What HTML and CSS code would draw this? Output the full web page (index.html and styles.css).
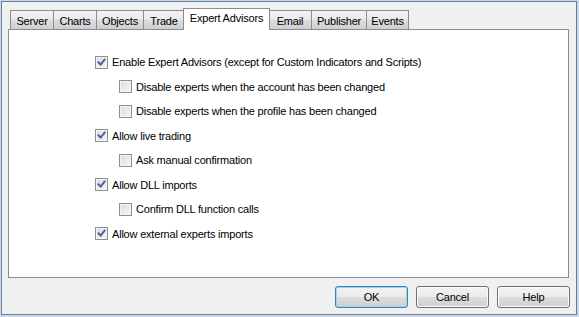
FILE: index.html
```html
<!DOCTYPE html>
<html>
<head>
<meta charset="utf-8">
<link rel="stylesheet" href="styles.css">
</head>
<body>
<div class="window">
  <div class="tabs">
    <div class="tab w-server">Server</div>
    <div class="tab w-charts">Charts</div>
    <div class="tab w-objects">Objects</div>
    <div class="tab w-trade">Trade</div>
    <div class="tab active w-ea">Expert Advisors</div>
    <div class="tab w-email">Email</div>
    <div class="tab w-pub">Publisher</div>
    <div class="tab w-events">Events</div>
  </div>
  <div class="panel">
    <div class="options">
      <label class="opt"><span class="cb checked"></span><span>Enable Expert Advisors (except for Custom Indicators and Scripts)</span></label>
      <label class="opt sub"><span class="cb"></span><span>Disable experts when the account has been changed</span></label>
      <label class="opt sub"><span class="cb"></span><span>Disable experts when the profile has been changed</span></label>
      <label class="opt"><span class="cb checked"></span><span>Allow live trading</span></label>
      <label class="opt sub"><span class="cb"></span><span>Ask manual confirmation</span></label>
      <label class="opt"><span class="cb checked"></span><span>Allow DLL imports</span></label>
      <label class="opt sub"><span class="cb"></span><span>Confirm DLL function calls</span></label>
      <label class="opt"><span class="cb checked"></span><span>Allow external experts imports</span></label>
    </div>
  </div>
  <div class="buttons">
    <button class="btn default">OK</button>
    <button class="btn">Cancel</button>
    <button class="btn">Help</button>
  </div>
</div>
</body>
</html>
```
FILE: styles.css
```css
html, body {
  margin: 0;
  padding: 0;
}
body {
  background: #c9d8ea;
  width: 579px;
  height: 317px;
  overflow: hidden;
  font-family: "Liberation Sans", Arial, sans-serif;
  font-size: 11px;
  letter-spacing: -0.2px;
  color: #000;
}
.window {
  box-sizing: border-box;
  margin: 1px 0 0 1px;
  width: 576px;
  height: 314px;
  background: #f0f0f0;
  border: 1px solid #6b7d95;
  padding: 0 6px 0 6px;
  display: flex;
  flex-direction: column;
}
.tabs {
  display: flex;
  align-items: flex-end;
  height: 20px;
  padding-top: 6px;
  padding-left: 2px;
  position: relative;
  z-index: 2;
}
.tab {
  box-sizing: border-box;
  height: 19px;
  margin-bottom: -1px;
  border: 1px solid #898c95;
  border-bottom: none;
  border-right: none;
  background: linear-gradient(#f3f3f3, #ebebeb 45%, #dddddd 50%, #cfcfcf);
  display: flex;
  align-items: center;
  justify-content: center;
  padding-top: 1px;
}
.tab.w-server { width: 43px; }
.tab.w-charts { width: 43px; }
.tab.w-objects { width: 47px; }
.tab.w-trade { border-right: 1px solid #898c95; width: 42px; }
.tab.active {
  width: 87px;
  height: 22px;
  background: #fff;
  border: 1px solid #898c95;
  border-bottom: none;
  margin-left: -2px;
  margin-right: -2px;
  margin-bottom: -2px;
  padding-top: 0;
  padding-bottom: 3px;
  position: relative;
  z-index: 3;
}
.tab.w-email { width: 43px; border-left: 1px solid #898c95; }
.tab.w-pub { width: 55px; }
.tab.w-events { width: 43px; border-right: 1px solid #898c95; }
.panel {
  box-sizing: border-box;
  width: 561px;
  height: 249px;
  margin-top: 1px;
  background: #fff;
  border: 1px solid #898c95;
  position: relative;
  z-index: 1;
}
.options {
  display: flex;
  flex-direction: column;
  padding: 20px 0 0 86px;
}
.opt {
  display: flex;
  align-items: center;
  gap: 4px;
  height: 24.5px;
}
.opt.sub {
  padding-left: 24px;
}
.cb {
  box-sizing: border-box;
  width: 13px;
  height: 13px;
  border: 1px solid #8e8f8f;
  background: linear-gradient(135deg, #dcdcdc, #f6f6f6);
  box-shadow: inset 0 0 0 1px #f4f4f4;
  position: relative;
  flex: none;
}
.cb.checked::after {
  content: "";
  position: absolute;
  left: 3px;
  top: 0px;
  width: 3px;
  height: 6px;
  border: solid #4d61a3;
  border-width: 0 2px 2px 0;
  transform: rotate(40deg);
}
.buttons {
  display: flex;
  justify-content: flex-end;
  gap: 8px;
  margin-top: 8px;
}
.btn {
  box-sizing: border-box;
  width: 73px;
  height: 22px;
  border: 1px solid #707070;
  border-radius: 3px;
  background: linear-gradient(#f2f2f2, #ebebeb 48%, #dddddd 52%, #cfcfcf);
  font-family: "Liberation Sans", Arial, sans-serif;
  font-size: 11px;
  letter-spacing: -0.2px;
  color: #000;
  padding: 0;
  box-shadow: inset 0 0 0 1px #fbfbfb;
}
.btn.default {
  border-color: #3c7fb1;
  box-shadow: inset 0 0 0 1px #9ad6f2;
}
```
